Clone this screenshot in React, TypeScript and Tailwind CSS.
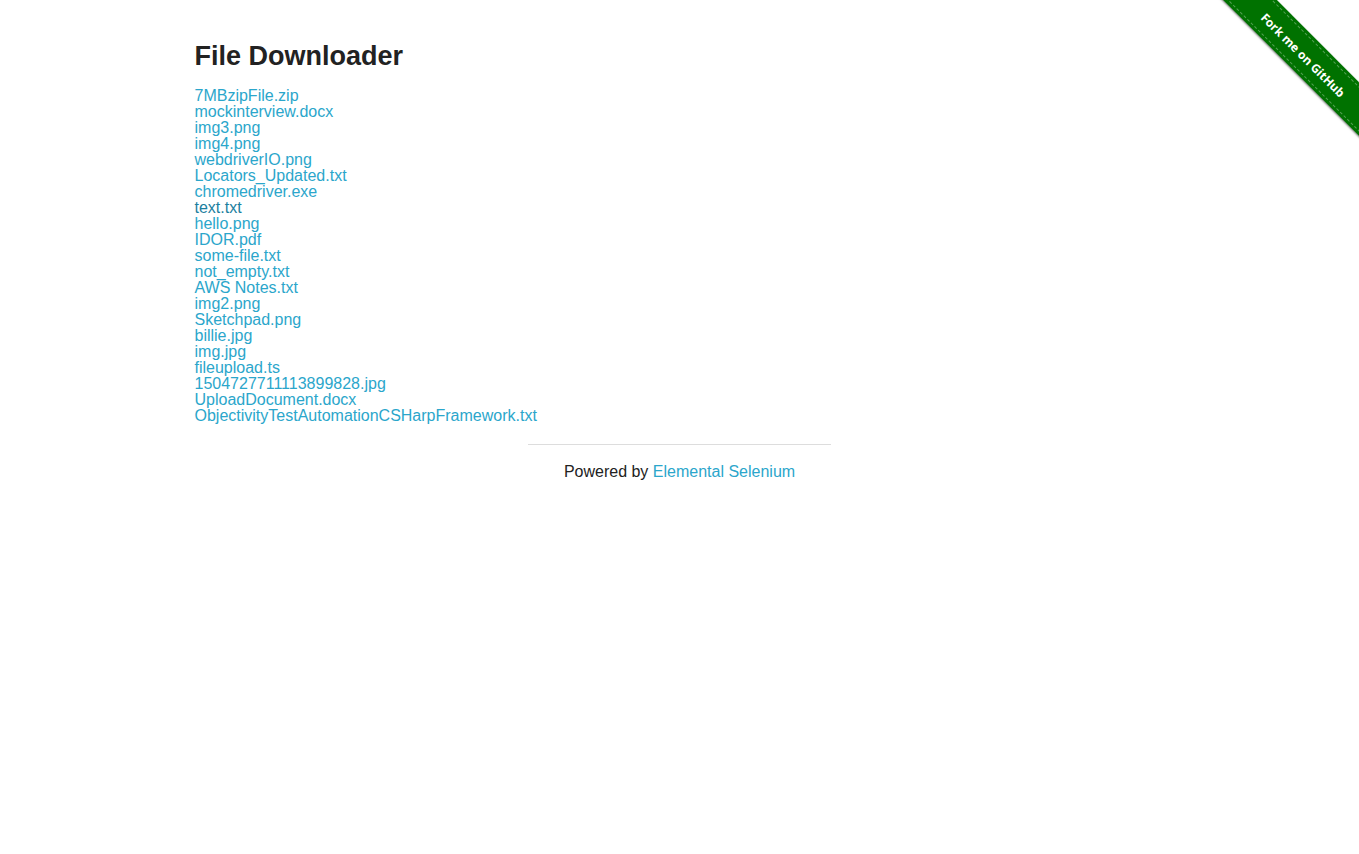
import React from "react";

const files = [
  "7MBzipFile.zip",
  "mockinterview.docx",
  "img3.png",
  "img4.png",
  "webdriverIO.png",
  "Locators_Updated.txt",
  "chromedriver.exe",
  "text.txt",
  "hello.png",
  "IDOR.pdf",
  "some-file.txt",
  "not_empty.txt",
  "AWS Notes.txt",
  "img2.png",
  "Sketchpad.png",
  "billie.jpg",
  "img.jpg",
  "fileupload.ts",
  "1504727711113899828.jpg",
  "UploadDocument.docx",
  "ObjectivityTestAutomationCSHarpFramework.txt",
];

export default function App() {
  return (
    <div
      className="relative min-h-[854px] bg-white text-[#222222]"
      style={{ fontFamily: '"Liberation Sans", Arial, sans-serif' }}
    >
      <div className="absolute top-0 right-0 w-[149px] h-[149px] overflow-hidden">
        <div className="absolute left-[-16px] top-[35px] w-[220px] h-[38px] rotate-45 bg-[#007200] shadow-[0_1px_2px_rgba(0,0,0,0.5)] flex items-center">
          <div className="w-full h-[32px] border-y border-dashed border-[#cfe6cf]/40 flex items-center justify-center pt-[4px]">
            <span
              className="text-white font-bold text-[12px] leading-none"
              style={{ fontFamily: '"Open Sans", "Liberation Sans", sans-serif' }}
            >
              Fork me on GitHub
            </span>
          </div>
        </div>
      </div>

      <div className="mx-auto w-[1000px] px-[15px] pt-[40px]">
        <h3 className="text-[27px] font-bold leading-[32px] text-[#222222]">File Downloader</h3>
        <div className="mt-[16px] text-[16px] leading-[16px]">
          {files.map((f) => (
            <div key={f}>
              <a
                href="#"
                className={f === "text.txt" ? "text-[#1d7fa0]" : "text-[#2ba6cb]"}
              >
                {f}
              </a>
            </div>
          ))}
        </div>
      </div>

      <div className="mx-auto w-[1000px] mt-[20px] flex justify-center">
        <div className="w-[303px]">
          <div className="h-px bg-[#dddddd]" />
          <div className="mt-[19px] text-center text-[16px] leading-[16px] text-[#222222]">
            Powered by{" "}
            <a href="#" className="text-[#2ba6cb]">
              Elemental Selenium
            </a>
          </div>
        </div>
      </div>
    </div>
  );
}
